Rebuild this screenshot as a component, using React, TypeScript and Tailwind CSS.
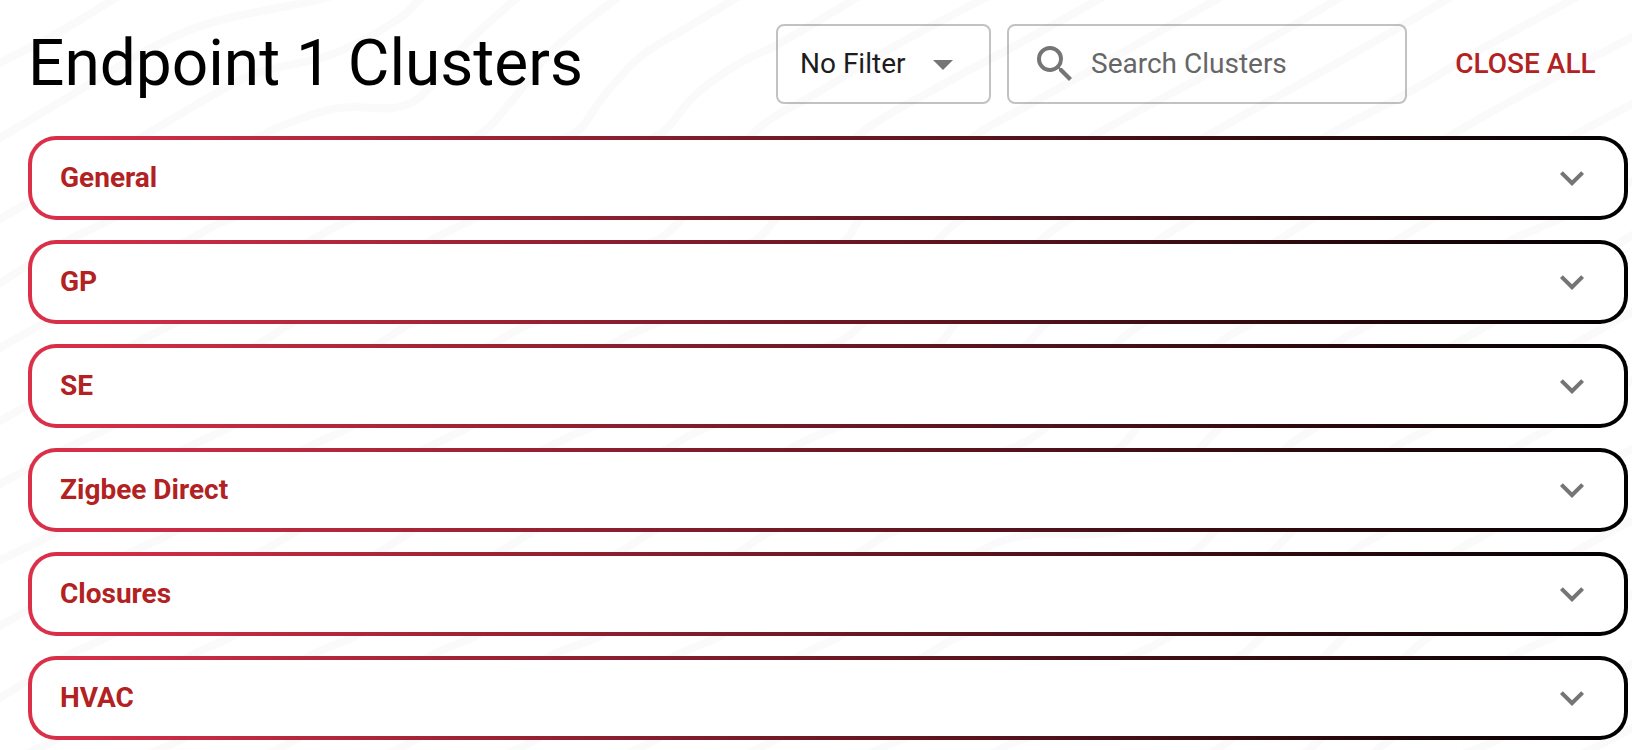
import { useState } from "react"

const clusters = ["General", "GP", "SE", "Zigbee Direct", "Closures", "HVAC"]

// background contour lines, each a list of points from the top right to the bottom left
const contours = [
  [[125, -8], [80, 20], [50, 37], [0, 63], [-20, 74]],
  [[335, -5], [313, 1], [233, 17], [187, 31], [133, 58], [80, 90], [0, 138], [-20, 150]],
  [[430, -12], [400, 18], [333, 54], [267, 70], [240, 80], [143, 136], [0, 219], [-20, 231]],
  [[528, -12], [467, 43], [420, 97], [393, 108], [350, 107], [317, 113], [260, 136], [110, 220], [67, 241], [0, 283], [-20, 295]],
  [[630, -10], [613, 1], [553, 50], [510, 103], [477, 136], [400, 160], [227, 220], [187, 241], [43, 324], [17, 338], [-20, 360]],
  [[750, -10], [683, 30], [640, 57], [603, 97], [573, 134], [480, 165], [350, 220], [310, 241], [173, 324], [140, 341], [0, 421], [-20, 432]],
  [[870, -10], [780, 43], [733, 67], [693, 97], [660, 134], [580, 170], [467, 222], [430, 241], [290, 324], [260, 343], [108, 428], [65, 449], [-20, 495]],
  [[1000, -10], [893, 47], [810, 97], [777, 115], [753, 134], [680, 221], [655, 241], [560, 270], [410, 324], [380, 343], [228, 428], [185, 449], [57, 532], [0, 560], [-20, 570]],
  [[1116, -10], [1020, 43], [933, 90], [860, 134], [775, 220], [755, 241], [670, 275], [530, 324], [500, 340], [348, 428], [305, 449], [170, 534], [130, 553], [0, 626], [-20, 640]],
  [[1233, -10], [1180, 20], [1027, 106], [977, 134], [860, 220], [845, 241], [780, 280], [655, 324], [612, 344], [467, 428], [425, 449], [295, 532], [260, 552], [110, 636], [67, 656], [0, 698], [-20, 708]],
  [[1353, -10], [1280, 33], [1200, 78], [1097, 134], [960, 220], [937, 241], [862, 324], [835, 344], [760, 365], [590, 428], [545, 449], [410, 532], [380, 552], [233, 636], [190, 656], [55, 740], [20, 757]],
  [[1463, -10], [1360, 50], [1280, 95], [1210, 134], [1068, 220], [1040, 241], [955, 324], [938, 344], [860, 375], [705, 428], [667, 449], [530, 533], [500, 552], [355, 636], [310, 656], [180, 740], [140, 757]],
  [[1590, -10], [1480, 50], [1413, 90], [1330, 134], [1190, 220], [1157, 241], [1045, 324], [1027, 344], [960, 385], [835, 428], [790, 449], [650, 533], [620, 552], [475, 636], [430, 656], [295, 740], [262, 757]],
  [[1650, 28], [1632, 37], [1513, 100], [1453, 134], [1310, 220], [1277, 241], [1142, 324], [1117, 344], [1045, 428], [1010, 449], [930, 475], [768, 533], [740, 552], [600, 636], [550, 656], [415, 740], [382, 757]],
  [[1650, 94], [1632, 104], [1577, 134], [1430, 220], [1395, 241], [1250, 324], [1218, 344], [1137, 428], [1117, 449], [1040, 480], [890, 533], [860, 552], [720, 636], [675, 656], [535, 740], [502, 757]],
  [[1650, 172], [1557, 220], [1510, 241], [1370, 324], [1335, 344], [1220, 428], [1200, 449], [1150, 520], [1090, 534], [1035, 534], [990, 546], [840, 636], [800, 656], [655, 740], [622, 757]],
  [[1650, 224], [1623, 241], [1490, 324], [1455, 344], [1315, 428], [1285, 449], [1213, 533], [1190, 554], [1100, 590], [960, 636], [925, 656], [775, 740], [742, 757]],
  [[1650, 303], [1610, 324], [1575, 344], [1430, 428], [1393, 449], [1292, 532], [1272, 552], [1170, 636], [1130, 656], [900, 740], [862, 757]],
  [[1650, 370], [1550, 428], [1513, 449], [1385, 532], [1352, 552], [1262, 636], [1240, 656], [1130, 710], [1020, 740], [985, 757]],
  [[1650, 440], [1632, 449], [1490, 532], [1455, 552], [1345, 636], [1325, 656], [1230, 740], [1205, 757]],
  [[1650, 512], [1610, 532], [1575, 552], [1430, 636], [1407, 656], [1320, 740], [1300, 757]],
  [[1650, 585], [1555, 636], [1513, 656], [1390, 740], [1368, 757]],
  [[1650, 655], [1632, 664], [1497, 740], [1455, 757]],
  [[1650, 718], [1610, 740], [1575, 757]],
]

// smooth curve that passes through every point
function toPath(points: number[][]) {
  let d = `M${points[0][0]} ${points[0][1]}`
  for (let i = 0; i < points.length - 1; i++) {
    const prev = points[Math.max(i - 1, 0)]
    const from = points[i]
    const to = points[i + 1]
    const next = points[Math.min(i + 2, points.length - 1)]
    const span = Math.hypot(to[0] - from[0], to[1] - from[1]) / 3
    const inLen = Math.hypot(to[0] - prev[0], to[1] - prev[1])
    const outLen = Math.hypot(next[0] - from[0], next[1] - from[1])
    const c1 = [from[0] + ((to[0] - prev[0]) / inLen) * span, from[1] + ((to[1] - prev[1]) / inLen) * span]
    const c2 = [to[0] - ((next[0] - from[0]) / outLen) * span, to[1] - ((next[1] - from[1]) / outLen) * span]
    d += ` C${c1.join(" ")} ${c2.join(" ")} ${to.join(" ")}`
  }
  return d
}

function Contours() {
  return (
    <svg className="absolute inset-0 -z-10 size-full" fill="none" stroke="#fafafa" strokeWidth="8" aria-hidden="true">
      {contours.map((points, i) => (
        <path key={i} d={toPath(points)} />
      ))}
    </svg>
  )
}

function ClusterRow({ name }: { name: string }) {
  return (
    <button
      type="button"
      className="flex h-[84px] w-full items-center justify-between rounded-[28px] bg-[linear-gradient(90deg,#dc3049,#000)] p-1 text-left"
    >
      <span className="flex size-full items-center justify-between rounded-3xl bg-white px-7">
        <span className="text-[28px] font-bold text-[#b22222]">{name}</span>
        <svg viewBox="0 0 24 24" className="size-12 fill-[#757575]" aria-hidden="true">
          <path d="M7.41 8.59 12 13.17l4.59-4.58L18 10l-6 6-6-6z" />
        </svg>
      </span>
    </button>
  )
}

export default function App() {
  const [search, setSearch] = useState("")

  return (
    <main className="relative isolate min-h-screen overflow-hidden bg-white pt-6 pr-1 pl-7 font-['Roboto',sans-serif]">
      <Contours />
      <header className="flex h-20 items-center">
        <h1 className="flex-1 text-[64px] text-black">Endpoint 1 Clusters</h1>
        <div className="relative mr-4 h-20 w-[215px]">
          <select
            aria-label="Filter"
            className="size-full appearance-none rounded-lg border-2 border-black/24 bg-transparent pl-[22px] text-[28px] text-[#1d1d1d]"
          >
            <option>No Filter</option>
          </select>
          <svg viewBox="0 0 24 24" className="pointer-events-none absolute top-4 right-6 size-12 fill-[#757575]" aria-hidden="true">
            <path d="M7 10l5 5 5-5z" />
          </svg>
        </div>
        <label className="flex h-20 w-[400px] items-center gap-3 rounded-lg border-2 border-black/24 pr-4 pl-[22px]">
          <svg viewBox="0 0 24 24" className="size-12 shrink-0 fill-[#757575]" aria-hidden="true">
            <path d="M15.5 14h-.79l-.28-.27A6.471 6.471 0 0 0 16 9.5 6.5 6.5 0 1 0 9.5 16c1.61 0 3.09-.59 4.23-1.57l.27.28v.79l5 4.99L20.49 19l-4.99-5zm-6 0C7.01 14 5 11.99 5 9.5S7.01 5 9.5 5 14 7.01 14 9.5 11.99 14 9.5 14z" />
          </svg>
          <input
            type="text"
            aria-label="Search Clusters"
            placeholder="Search Clusters"
            value={search}
            onChange={(e) => setSearch(e.target.value)}
            className="w-full min-w-0 bg-transparent text-[28px] text-[#1d1d1d] outline-none placeholder:text-[#666]"
          />
        </label>
        <button type="button" className="mr-8 ml-12 w-[141px] text-[28px] font-medium whitespace-nowrap text-[#b22222]">
          CLOSE ALL
        </button>
      </header>
      <div className="mt-8 flex flex-col gap-5">
        {clusters.map((name) => (
          <ClusterRow key={name} name={name} />
        ))}
      </div>
    </main>
  )
}
